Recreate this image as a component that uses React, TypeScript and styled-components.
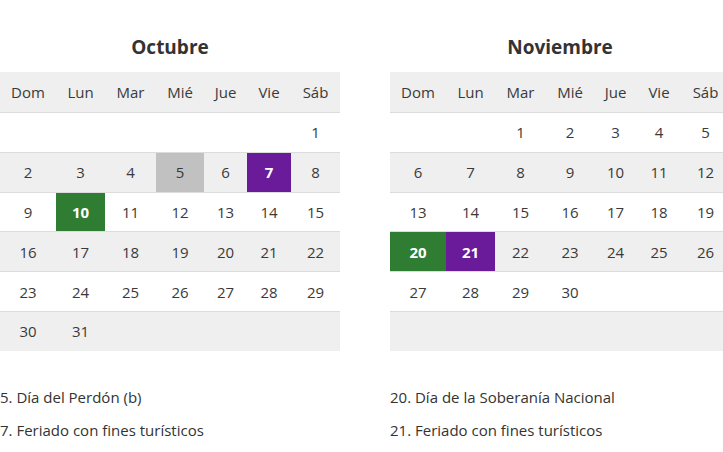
import styled, { createGlobalStyle } from 'styled-components';

const GlobalStyle = createGlobalStyle`
  body {
    margin: 0;
    background: #ffffff;
    font-family: 'Open Sans', 'Noto Sans', sans-serif;
    color: #333333;
  }
`;

const Page = styled.div`
  display: flex;
  gap: 50px;
  padding-top: 35px;
`;

const MonthColumn = styled.section`
  width: 340px;
  flex: none;
`;

const Title = styled.h3`
  margin: 0 0 13px;
  font-size: 19px;
  line-height: 24px;
  font-weight: 700;
  text-align: center;
  color: #333333;
`;

const COLS = '56px 49px 51px 48px 43px 44px 49px';

const Row = styled.div<{ shaded?: boolean; head?: boolean }>`
  display: grid;
  grid-template-columns: ${COLS};
  height: ${({ head }) => (head ? '40px' : '39.8px')};
  background: ${({ shaded }) => (shaded ? '#efefef' : '#ffffff')};
  border-top: ${({ head }) => (head ? 'none' : '1px solid #dcdcdc')};
  box-sizing: border-box;
`;

const Cell = styled.div<{ mark?: 'gray' | 'purple' | 'green' }>`
  display: flex;
  align-items: center;
  justify-content: center;
  font-size: 15px;
  color: ${({ mark }) => (mark === 'purple' || mark === 'green' ? '#ffffff' : '#3a3a3a')};
  font-weight: ${({ mark }) => (mark === 'purple' || mark === 'green' ? 700 : 400)};
  background: ${({ mark }) =>
    mark === 'gray' ? '#c1c1c1' : mark === 'purple' ? '#6a1b9a' : mark === 'green' ? '#2e7d32' : 'transparent'};
`;

const Legend = styled.ul`
  list-style: none;
  margin: 35px 0 0;
  padding: 0;
  display: flex;
  flex-direction: column;
  gap: 11px;
`;

const LegendItem = styled.li`
  font-size: 15px;
  line-height: 22px;
  color: #333333;
`;

const DAYS = ['Dom', 'Lun', 'Mar', 'Mié', 'Jue', 'Vie', 'Sáb'];

type Mark = 'gray' | 'purple' | 'green';

interface MonthProps {
  name: string;
  offset: number;
  days: number;
  marks: Record<number, Mark>;
  notes: string[];
}

const Month = ({ name, offset, days, marks, notes }: MonthProps) => {
  const cells: (number | null)[] = [];
  for (let i = 0; i < offset; i++) cells.push(null);
  for (let d = 1; d <= days; d++) cells.push(d);
  while (cells.length < 42) cells.push(null);
  const weeks: (number | null)[][] = [];
  for (let i = 0; i < 6; i++) weeks.push(cells.slice(i * 7, i * 7 + 7));

  return (
    <MonthColumn>
      <Title>{name}</Title>
      <Row head shaded>
        {DAYS.map((d) => (
          <Cell key={d}>{d}</Cell>
        ))}
      </Row>
      {weeks.map((week, i) => (
        <Row key={i} shaded={i % 2 === 1}>
          {week.map((d, j) => (
            <Cell key={j} mark={d ? marks[d] : undefined}>
              {d ?? ''}
            </Cell>
          ))}
        </Row>
      ))}
      <Legend>
        {notes.map((n) => (
          <LegendItem key={n}>{n}</LegendItem>
        ))}
      </Legend>
    </MonthColumn>
  );
};

export default function App() {
  return (
    <>
      <GlobalStyle />
      <Page>
        <Month
          name="Octubre"
          offset={6}
          days={31}
          marks={{ 5: 'gray', 7: 'purple', 10: 'green' }}
          notes={['5. Día del Perdón (b)', '7. Feriado con fines turísticos']}
        />
        <Month
          name="Noviembre"
          offset={2}
          days={30}
          marks={{ 20: 'green', 21: 'purple' }}
          notes={['20. Día de la Soberanía Nacional', '21. Feriado con fines turísticos']}
        />
      </Page>
    </>
  );
}
